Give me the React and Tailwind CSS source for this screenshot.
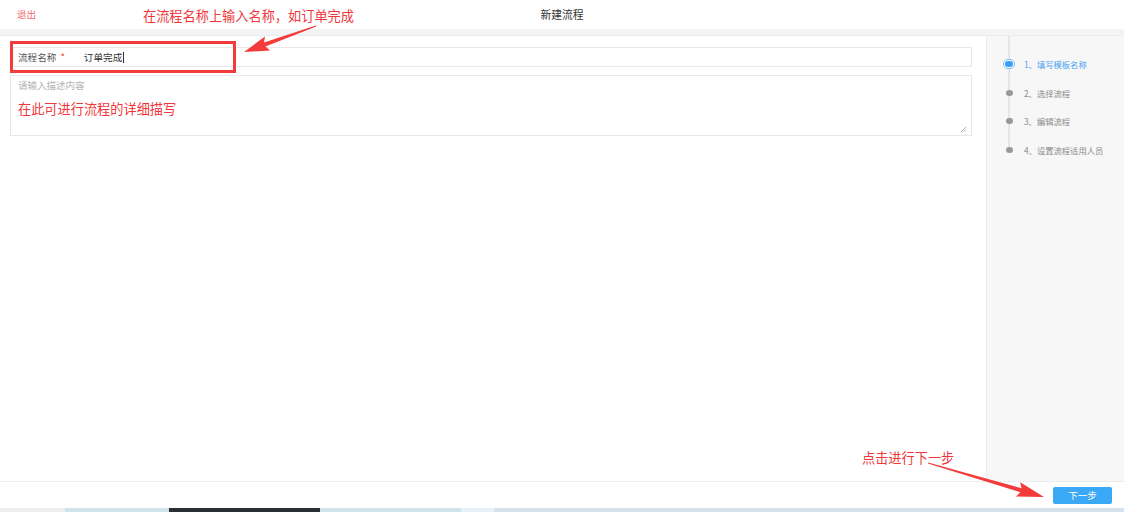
import React from "react";

function arrowPoints(x1, y1, x2, y2, headLen, headW, shaftW) {
  const dx = x2 - x1, dy = y2 - y1;
  const L = Math.hypot(dx, dy);
  const ux = dx / L, uy = dy / L;
  const nx = -uy, ny = ux;
  const bx = x2 - ux * headLen, by = y2 - uy * headLen;
  const pts = [
    [x1 + nx * 0.5, y1 + ny * 0.5],
    [bx + nx * shaftW / 2, by + ny * shaftW / 2],
    [bx + nx * headW / 2 - ux * 3, by + ny * headW / 2 - uy * 3],
    [x2, y2],
    [bx - nx * headW / 2 - ux * 3, by - ny * headW / 2 - uy * 3],
    [bx - nx * shaftW / 2, by - ny * shaftW / 2],
    [x1 - nx * 0.5, y1 - ny * 0.5],
  ];
  return pts.map((p) => p.map((v) => v.toFixed(1)).join(",")).join(" ");
}

function Step({ n, label, active }) {
  return (
    <div className="h-[28.5px] flex items-center">
      <div className="w-[44px] flex justify-center">
        {active ? (
          <div className="w-[12px] h-[10px] rounded-full border border-[#7cc0f7] bg-white flex items-center justify-center">
            <div className="w-[8px] h-[6px] rounded-full bg-[#3b9cf2]" />
          </div>
        ) : (
          <div className="w-[7px] h-[6px] rounded-full bg-[#9a9a9a]" />
        )}
      </div>
      <div className={"text-[8.3px] leading-none -ml-[7px] " + (active ? "text-[#4aa3f0]" : "text-[#8a8a8a]")}>
        {n}、{label}
      </div>
    </div>
  );
}

export default function App() {
  const font = { fontFamily: '"Noto Sans CJK SC", "Noto Sans", sans-serif' };
  return (
    <div className="relative w-[1124px] h-[512px] overflow-hidden bg-white flex flex-col" style={font}>
      {/* header */}
      <div className="h-[29px] grid grid-cols-[1fr_auto_1fr] items-center shrink-0">
        <div className="pl-[17px] text-[9.5px] text-[#f26a6a]">退出</div>
        <div className="text-[10.8px] text-[#333]">新建流程</div>
        <div />
      </div>
      <div className="h-[7px] bg-[#f3f4f6] border-b border-[#ececef] shrink-0" />

      {/* main */}
      <div className="flex flex-1 min-h-0">
        <div className="flex-1 pl-[10px] pr-[14px] pt-[11px] flex flex-col gap-[8px]">
          <div className="h-[20px] border border-[#e8e8e8] flex items-center text-[9.6px]">
            <span className="pl-[7px] text-[#555]">流程名称</span>
            <span className="ml-[4px] text-[#f24848]">*</span>
            <span className="ml-[19px] text-[#333]">订单完成</span>
            <span className="ml-[1px] w-px h-[11px] bg-[#333]" />
          </div>
          <div className="relative h-[61px] border border-[#e8e8e8] pl-[7px] pt-[5px]">
            <div className="text-[9.5px] text-[#b4b4b4] leading-none">请输入描述内容</div>
            <div className="mt-[11px] text-[13.2px] text-[#f0363a] leading-none">在此可进行流程的详细描写</div>
            <svg className="absolute right-[5px] bottom-[3px]" width="6" height="6" viewBox="0 0 6 6">
              <path d="M1 6 L6 1 M3.5 6 L6 3.5" stroke="#999" strokeWidth="0.8" />
            </svg>
          </div>
        </div>
        <div className="relative w-[138px] shrink-0 border-l border-[#ececec] bg-[#f7f7f7]">
          <div className="absolute left-[21px] top-0 w-[2px] h-[114px] bg-[#e6e6e6]" />
          <div className="relative pt-[14px]">
            <Step n="1" label="填写模板名称" active />
            <Step n="2" label="选择流程" />
            <Step n="3" label="编辑流程" />
            <Step n="4" label="设置流程适用人员" />
          </div>
        </div>
      </div>

      {/* footer */}
      <div className="h-[27px] shrink-0 border-t border-[#ececec] flex items-center justify-end pr-[12px]">
        <div className="w-[59px] h-[17px] rounded-[2px] bg-[#3aa8f5] text-white text-[9.5px] flex items-center justify-center">下一步</div>
      </div>
      {/* bottom strip */}
      <div className="h-[4px] shrink-0 flex">
        <div className="w-[65px] bg-[#eeeeee]" />
        <div className="w-[104px] bg-[#cfe3ec]" />
        <div className="w-[151px] bg-[#2b2f33]" />
        <div className="w-[141px] bg-[#cfe3ec]" />
        <div className="w-[33px] bg-[#e6f0f6]" />
        <div className="flex-1 bg-[#d5e1ec]" />
      </div>

      {/* annotations */}
      <div className="absolute left-[10px] top-[41px] w-[226px] h-[32px] border-[3px] border-[#f33b3b]" />
      <div className="absolute left-[143px] top-[9px] text-[13.2px] text-[#f0363a] leading-none">在流程名称上输入名称，如订单完成</div>
      <div className="absolute left-[862px] top-[451px] text-[13.2px] text-[#f0363a] leading-none">点击进行下一步</div>
      <svg className="absolute left-0 top-0 pointer-events-none" width="1124" height="512">
        <polygon points={arrowPoints(316, 26, 244, 52, 22, 15, 4)} fill="#f33b3b" />
        <polygon points={arrowPoints(928, 463, 1044, 497, 24, 15, 4)} fill="#f33b3b" />
      </svg>
    </div>
  );
}
